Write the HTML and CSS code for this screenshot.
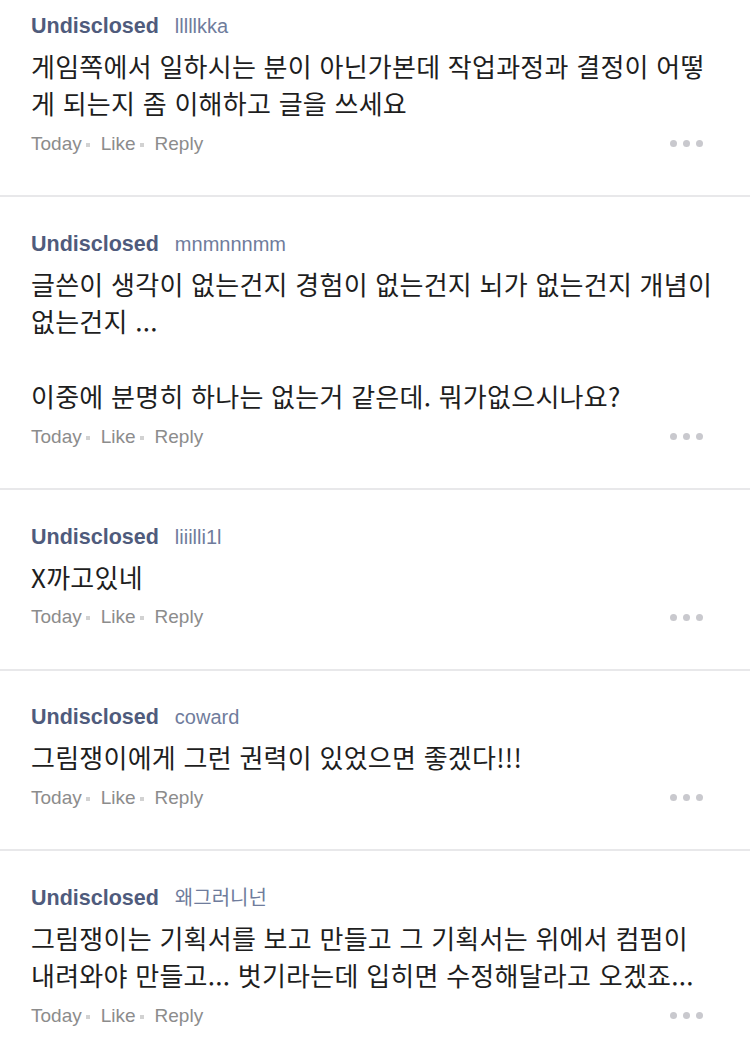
FILE: index.html
```html
<!DOCTYPE html>
<html lang="ko">
<head>
<meta charset="utf-8">
<title>Comments</title>
<link rel="stylesheet" href="styles.css">
</head>
<body>
<main class="feed">
  <article class="comment">
    <div class="head"><span class="name">Undisclosed</span><span class="user">lllllkka</span></div>
    <p class="text">게임쪽에서 일하시는 분이 아닌가본데 작업과정과 결정이 어떻게 되는지 좀 이해하고 글을 쓰세요</p>
    <div class="meta"><span class="act">Today</span><span class="act">Like</span><span class="act">Reply</span><span class="more"><i></i><i></i><i></i></span></div>
  </article>
  <article class="comment">
    <div class="head"><span class="name">Undisclosed</span><span class="user">mnmnnnmm</span></div>
    <p class="text">글쓴이 생각이 없는건지 경험이 없는건지 뇌가 없는건지 개념이 없는건지 ...</p>
    <p class="text">이중에 분명히 하나는 없는거 같은데. 뭐가없으시나요?</p>
    <div class="meta"><span class="act">Today</span><span class="act">Like</span><span class="act">Reply</span><span class="more"><i></i><i></i><i></i></span></div>
  </article>
  <article class="comment">
    <div class="head"><span class="name">Undisclosed</span><span class="user">liiilli1l</span></div>
    <p class="text">X까고있네</p>
    <div class="meta"><span class="act">Today</span><span class="act">Like</span><span class="act">Reply</span><span class="more"><i></i><i></i><i></i></span></div>
  </article>
  <article class="comment">
    <div class="head"><span class="name">Undisclosed</span><span class="user">coward</span></div>
    <p class="text">그림쟁이에게 그런 권력이 있었으면 좋겠다!!!</p>
    <div class="meta"><span class="act">Today</span><span class="act">Like</span><span class="act">Reply</span><span class="more"><i></i><i></i><i></i></span></div>
  </article>
  <article class="comment">
    <div class="head"><span class="name">Undisclosed</span><span class="user">왜그러니넌</span></div>
    <p class="text">그림쟁이는 기획서를 보고 만들고 그 기획서는 위에서 컴펌이 내려와야 만들고... 벗기라는데 입히면 수정해달라고 오겠죠...</p>
    <div class="meta"><span class="act">Today</span><span class="act">Like</span><span class="act">Reply</span><span class="more"><i></i><i></i><i></i></span></div>
  </article>
</main>
</body>
</html>
```
FILE: styles.css
```css
html, body {
  margin: 0;
  padding: 0;
  background: #ffffff;
}

body {
  font-family: "Liberation Sans", "Noto Sans CJK KR", sans-serif;
  width: 750px;
  overflow: hidden;
}

.feed {
  display: flex;
  flex-direction: column;
}

.comment {
  padding: 33.5px 34px 39.5px 31px;
  border-bottom: 2px solid #e8e8ea;
}

.comment:first-child {
  padding-top: 12.5px;
}

.comment:last-child {
  border-bottom: none;
}

.head {
  display: flex;
  align-items: baseline;
  gap: 16px;
  height: 26px;
  line-height: 26px;
}

.name {
  font-size: 21.5px;
  font-weight: bold;
  color: #4f5b7c;
}

.user {
  font-size: 20px;
  color: #6f7c9c;
}

.text {
  margin: 8px 0 0;
  font-family: "Noto Sans CJK KR", sans-serif;
  font-size: 26px;
  line-height: 37.5px;
  letter-spacing: 0.25px;
  color: #1e1e1e;
  word-break: break-all;
}

.text + .text {
  margin-top: 37.5px;
}

.meta {
  display: flex;
  align-items: baseline;
  margin-top: 10px;
  height: 24px;
  line-height: 24px;
  font-size: 19px;
  color: #8c8c8c;
}

.act:not(:nth-child(3))::after {
  content: "";
  display: inline-block;
  width: 4px;
  height: 4px;
  background: #d2d2d2;
  margin: 0 11px 3px 4px;
  vertical-align: baseline;
}

.more {
  margin-left: auto;
  margin-right: 13px;
  display: flex;
  gap: 6px;
  align-self: center;
}

.more i {
  display: block;
  width: 7px;
  height: 7px;
  border-radius: 50%;
  background: #c9c9ce;
}
```
